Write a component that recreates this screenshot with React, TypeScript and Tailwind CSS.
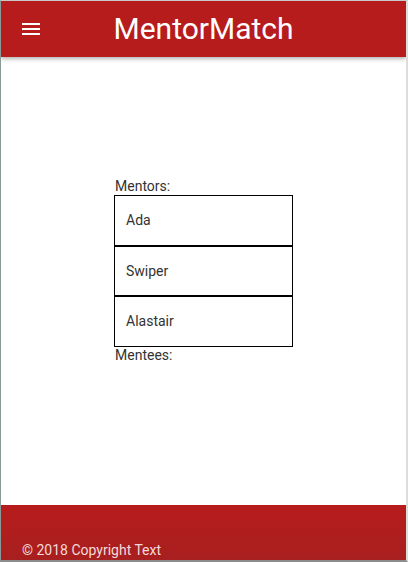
import React from "react";

export default function App() {
  const mentors = [
    { name: "Ada", h: "h-[51px]" },
    { name: "Swiper", h: "h-[50px]" },
    { name: "Alastair", h: "h-[51px]" },
  ];
  return (
    <div
      className="w-[408px] h-[562px] flex flex-col bg-white border-l border-t border-r-2 border-b-2 border-l-[#8a9a96] border-t-[#c8c8c8] border-r-[#dcdcdc] border-b-[#8c8c8c] overflow-hidden"
      style={{ fontFamily: "Roboto, 'Liberation Sans', sans-serif" }}
    >
      <header className="relative z-10 h-[56px] shrink-0 bg-[#b71c1c] flex items-center justify-center shadow-[0_2px_4px_rgba(0,0,0,0.3)]">
        <svg
          className="absolute left-[21px] top-[21px]"
          width="18"
          height="14"
          viewBox="0 0 18 14"
        >
          <rect x="0" y="1" width="18" height="2" fill="white" />
          <rect x="0" y="6" width="18" height="2" fill="white" />
          <rect x="0" y="11" width="18" height="2" fill="white" />
        </svg>
        <h1 className="text-white text-[30px] leading-none mt-[-1px]">MentorMatch</h1>
      </header>
      <main className="flex-1 flex flex-col items-center pt-[121px]">
        <div className="w-[179px] text-[14px] text-[#333]">
          <div className="leading-[17px] pl-[1px]">Mentors:</div>
          <div className="flex flex-col">
            {mentors.map((m) => (
              <div
                key={m.name}
                className={`${m.h} border border-black flex items-center pl-[11px] text-[#333]`}
              >
                {m.name}
              </div>
            ))}
          </div>
          <div className="leading-[17px] pl-[1px]">Mentees:</div>
        </div>
      </main>
      <footer className="h-[55px] shrink-0 bg-gradient-to-b from-[#b71c1c] to-[#a81f1f] flex items-end pl-[21px] pb-[1px]">
        <span className="text-[14px] text-[#f3dada] leading-[17px]">© 2018 Copyright Text</span>
      </footer>
    </div>
  );
}
